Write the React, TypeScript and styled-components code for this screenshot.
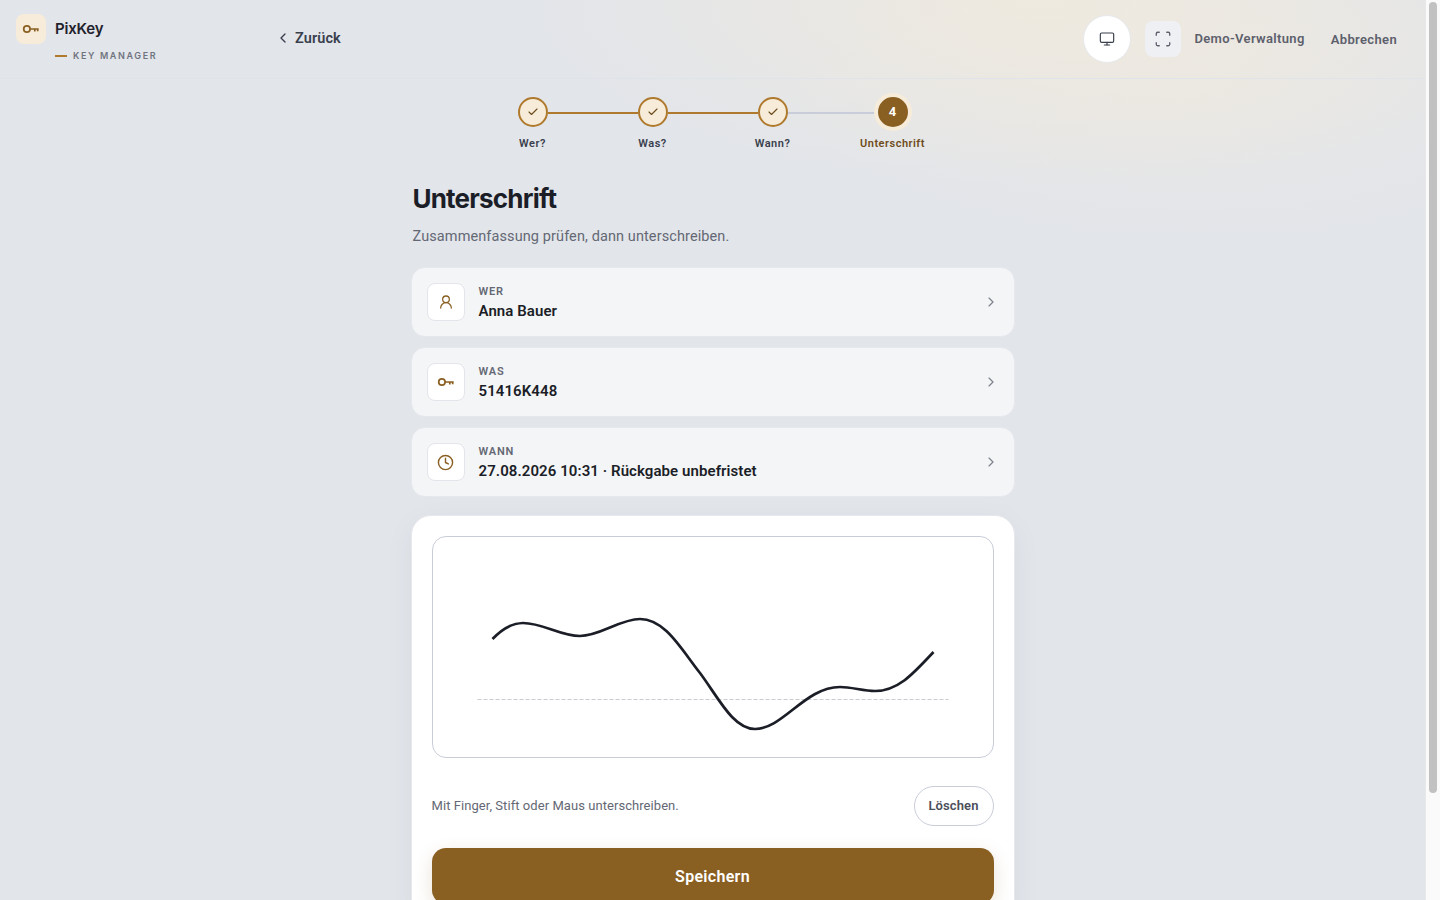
import React from 'react';
import styled, { createGlobalStyle } from 'styled-components';
import { Check, ChevronLeft, ChevronRight, Clock, Monitor, Scan, UserRound } from 'lucide-react';

const GlobalStyle = createGlobalStyle`
    body {
        margin: 0;
        min-height: 100vh;
        background: #e2e5ea;
        font-family: Roboto, sans-serif;
        color: #1b1e27;
    }
`;
const Page = styled.div`
    height: 1020px;
    padding-right: 15px;
    background:
        radial-gradient(ellipse 520px 190px at 1040px 0px, rgba(246, 236, 217, 0.62), rgba(246, 236, 217, 0) 100%),
        radial-gradient(ellipse 420px 160px at 1200px 90px, rgba(246, 236, 217, 0.3), rgba(246, 236, 217, 0) 100%);
`;
const ScrollTrack = styled.div`
    position: fixed;
    top: 0;
    right: 0;
    bottom: 0;
    width: 14px;
    background: #fafafa;
    border-left: 1px solid #e8e8e8;
`;
const ScrollThumb = styled.div`
    width: 8px;
    height: 791px;
    margin: 2px 0 0 3px;
    border-radius: 4px;
    background: #c1c1c1;
`;
const Header = styled.header`
    height: 78px;
    border-bottom: 1px solid #dfe3ea;
    display: flex;
    align-items: center;
    padding: 0 28px 0 16px;
`;
const Brand = styled.div`
    width: 247px;
    flex: none;
    align-self: flex-start;
    padding-top: 14px;
`;
const BrandTop = styled.div`
    display: flex;
    align-items: center;
    gap: 9px;
`;
const LogoBox = styled.div`
    width: 30px;
    height: 30px;
    border-radius: 8px;
    background: #f6ecd9;
    color: #8a5f22;
    display: flex;
    align-items: center;
    justify-content: center;
`;
const BrandName = styled.div`
    font: 600 15px/20px Inter, sans-serif;
    letter-spacing: -0.2px;
    color: #1f222c;
`;
const BrandSub = styled.div`
    display: flex;
    align-items: center;
    gap: 6px;
    margin: 5px 0 0 39px;
    font: 600 9px/14px Inter, sans-serif;
    letter-spacing: 1.62px;
    color: #70747f;
`;
const SubDash = styled.span`
    width: 12px;
    height: 2px;
    background: #b07a2e;
`;
const BackLink = styled.div`
    display: flex;
    align-items: center;
    gap: 4px;
    margin: 0 0 2px 12px;
    font-size: 14.5px;
    font-weight: 600;
    letter-spacing: 0.1px;
    color: #3a3f4d;
`;
const Actions = styled.div`
    margin-left: auto;
    display: flex;
    align-items: center;
`;
const RoundButton = styled.div`
    width: 48px;
    height: 48px;
    box-sizing: border-box;
    border-radius: 50%;
    background: #fff;
    border: 1px solid #e6e8ed;
    display: flex;
    align-items: center;
    justify-content: center;
    color: #3a3f4d;
`;
const SquareButton = styled.div`
    width: 36px;
    height: 36px;
    margin-left: 14px;
    border-radius: 8px;
    background: #eff0f3;
    display: flex;
    align-items: center;
    justify-content: center;
    color: #5c606c;
`;
const ActionText = styled.div<{ $gap: number; $lift?: number }>`
    margin: 0 0 ${p => p.$lift ?? 0}px ${p => p.$gap}px;
    font-size: 13px;
    font-weight: 600;
    letter-spacing: 0.35px;
    color: #5c606c;
`;
const Column = styled.main`
    width: 604px;
    margin: 0 auto;
`;
const Stepper = styled.div`
    display: flex;
    justify-content: center;
    padding-top: 18px;
`;
const Step = styled.div`
    position: relative;
    width: 120px;
    display: flex;
    flex-direction: column;
    align-items: center;
`;
const Connector = styled.div<{ $done: boolean }>`
    position: absolute;
    top: 15px;
    left: 75px;
    width: 90px;
    height: 2px;
    background: ${p => (p.$done ? '#b07a2e' : '#c8cdd9')};
`;
const Dot = styled.div<{ $active?: boolean }>`
    position: relative;
    width: 30px;
    height: 30px;
    box-sizing: border-box;
    padding-bottom: ${p => (p.$active ? '1px' : '0')};
    border-radius: 50%;
    display: flex;
    align-items: center;
    justify-content: center;
    border: 2px solid ${p => (p.$active ? '#8a5f22' : '#b07a2e')};
    background: ${p => (p.$active ? '#8a5f22' : '#f6ecd9')};
    box-shadow: ${p => (p.$active ? '0 0 0 4px #f6ecd9' : 'none')};
    color: ${p => (p.$active ? '#fff' : '#6f4c1b')};
    font-size: 13px;
    font-weight: 700;
`;
const StepLabel = styled.div<{ $active?: boolean }>`
    margin-top: 9px;
    font-size: 11px;
    line-height: 16px;
    font-weight: 600;
    letter-spacing: 0.5px;
    color: ${p => (p.$active ? '#6f4c1b' : '#3a3f4d')};
`;
const Title = styled.h1`
    margin: 29px 0 0 2px;
    font: 700 26px/36px Inter, sans-serif;
    letter-spacing: -0.8px;
    color: #1b1e27;
`;
const Lead = styled.p`
    margin: 10px 0 20px 2px;
    font-size: 14.5px;
    line-height: 20px;
    letter-spacing: 0.1px;
    color: #646874;
`;
const SummaryList = styled.div`
    display: flex;
    flex-direction: column;
    gap: 10px;
`;
const SummaryRow = styled.div`
    height: 70px;
    box-sizing: border-box;
    padding: 0 15px;
    display: flex;
    align-items: center;
    background: #f4f5f7;
    border: 1px solid #e6e8ed;
    border-radius: 14px;
    color: #8a5f22;
`;
const SummaryIcon = styled.div`
    width: 38px;
    height: 38px;
    box-sizing: border-box;
    border: 1px solid #e3e5ea;
    border-radius: 8px;
    background: #fff;
    display: flex;
    align-items: center;
    justify-content: center;
    margin-right: 14px;
`;
const SummaryText = styled.div`
    flex: 1;
    padding-top: 1px;
`;
const SummaryLabel = styled.div`
    font-size: 11px;
    line-height: 16px;
    font-weight: 600;
    letter-spacing: 0.85px;
    color: #646874;
`;
const SummaryValue = styled.div`
    margin-top: 1px;
    font-size: 15px;
    line-height: 20px;
    font-weight: 600;
    letter-spacing: 0.08px;
    color: #1b1e27;
`;
const SignCard = styled.section`
    margin-top: 18px;
    padding: 20px;
    background: #fff;
    border: 1px solid #e6e8ed;
    border-radius: 20px;
    box-shadow: 0 8px 30px rgba(40, 50, 70, 0.05);
`;
const Canvas = styled.div`
    height: 222px;
    box-sizing: border-box;
    border: 1px solid #c8cdd9;
    border-radius: 14px;
    background: #fff;
`;
const CanvasArt = styled.svg`
    display: block;
    width: 100%;
    height: 100%;
`;
const HintRow = styled.div`
    margin-top: 28px;
    display: flex;
    align-items: center;
    justify-content: space-between;
`;
const Hint = styled.div`
    margin-bottom: 2px;
    font-size: 13px;
    letter-spacing: 0.06px;
    color: #646874;
`;
const ClearButton = styled.button`
    width: 80px;
    height: 40px;
    border: 1px solid #c8cdd9;
    border-radius: 20px;
    background: #fff;
    padding: 0 0 1px;
    font: 600 13px Roboto, sans-serif;
    letter-spacing: 0.1px;
    color: #4a4e5a;
`;
const SaveButton = styled.button`
    display: block;
    width: 100%;
    height: 56px;
    margin-top: 22px;
    border: 0;
    border-radius: 14px;
    background: #8a5f22;
    box-shadow: 0 6px 18px rgba(138, 95, 34, 0.18);
    font: 600 16px Roboto, sans-serif;
    letter-spacing: 0.3px;
    color: #fff;
`;

function KeyIcon() {
    return (
        <svg width="18" height="18" viewBox="0 0 18 18" fill="none" stroke="currentColor" strokeWidth="1.7" strokeLinecap="butt">
            <circle cx="4.9" cy="9" r="3.2" />
            <path d="M8.1 9h8.6M12.8 9v2.6M15.7 9v2.2" />
        </svg>
    );
}

const steps = ['Wer?', 'Was?', 'Wann?', 'Unterschrift'];

const summary = [
    { label: 'WER', value: 'Anna Bauer', icon: <UserRound size={16} strokeWidth={1.9} /> },
    { label: 'WAS', value: '51416K448', icon: <KeyIcon /> },
    { label: 'WANN', value: '27.08.2026 10:31 · Rückgabe unbefristet', icon: <Clock size={17} strokeWidth={2} /> }
];

export default function App() {
    return (
        <Page>
            <GlobalStyle />
            <Header>
                <Brand>
                    <BrandTop>
                        <LogoBox><KeyIcon /></LogoBox>
                        <BrandName>PixKey</BrandName>
                    </BrandTop>
                    <BrandSub><SubDash />KEY MANAGER</BrandSub>
                </Brand>
                <BackLink><ChevronLeft size={16} strokeWidth={2} />Zurück</BackLink>
                <Actions>
                    <RoundButton><Monitor size={16} strokeWidth={1.75} /></RoundButton>
                    <SquareButton><Scan size={18} strokeWidth={1.75} /></SquareButton>
                    <ActionText $gap={13} $lift={2}>Demo-Verwaltung</ActionText>
                    <ActionText $gap={26}>Abbrechen</ActionText>
                </Actions>
            </Header>
            <Column>
                <Stepper>
                    {steps.map((name, i) => (
                        <Step key={name}>
                            {i < 3 && <Connector $done={i < 2} />}
                            <Dot $active={i === 3}>{i === 3 ? '4' : <Check size={12} strokeWidth={2.25} />}</Dot>
                            <StepLabel $active={i === 3}>{name}</StepLabel>
                        </Step>
                    ))}
                </Stepper>
                <Title>Unterschrift</Title>
                <Lead>Zusammenfassung prüfen, dann unterschreiben.</Lead>
                <SummaryList>
                    {summary.map(row => (
                        <SummaryRow key={row.label}>
                            <SummaryIcon>{row.icon}</SummaryIcon>
                            <SummaryText>
                                <SummaryLabel>{row.label}</SummaryLabel>
                                <SummaryValue>{row.value}</SummaryValue>
                            </SummaryText>
                            <ChevronRight size={16} color="#7d818c" strokeWidth={1.75} />
                        </SummaryRow>
                    ))}
                </SummaryList>
                <SignCard>
                    <Canvas>
                        <CanvasArt viewBox="0 0 560 220">
                            <line x1="44.5" y1="162.5" x2="515.5" y2="162.5" stroke="#c9cbd0" strokeWidth="1" strokeDasharray="4 2" />
                            <path
                                d="M59.5 102C70 91 79 86 90 86C110 86 127 99 147 99C167 99 187 82 207 82C232 82 248 112 267 136C285 160 300 192 322 192C350 192 372 150 407 150C419 150 430 154 442 154C465 154 480 137 500.5 115"
                                fill="none"
                                stroke="#1b1e27"
                                strokeWidth="2.7"
                                strokeLinecap="butt"
                            />
                        </CanvasArt>
                    </Canvas>
                    <HintRow>
                        <Hint>Mit Finger, Stift oder Maus unterschreiben.</Hint>
                        <ClearButton>Löschen</ClearButton>
                    </HintRow>
                    <SaveButton>Speichern</SaveButton>
                </SignCard>
            </Column>
            <ScrollTrack><ScrollThumb /></ScrollTrack>
        </Page>
    );
}
